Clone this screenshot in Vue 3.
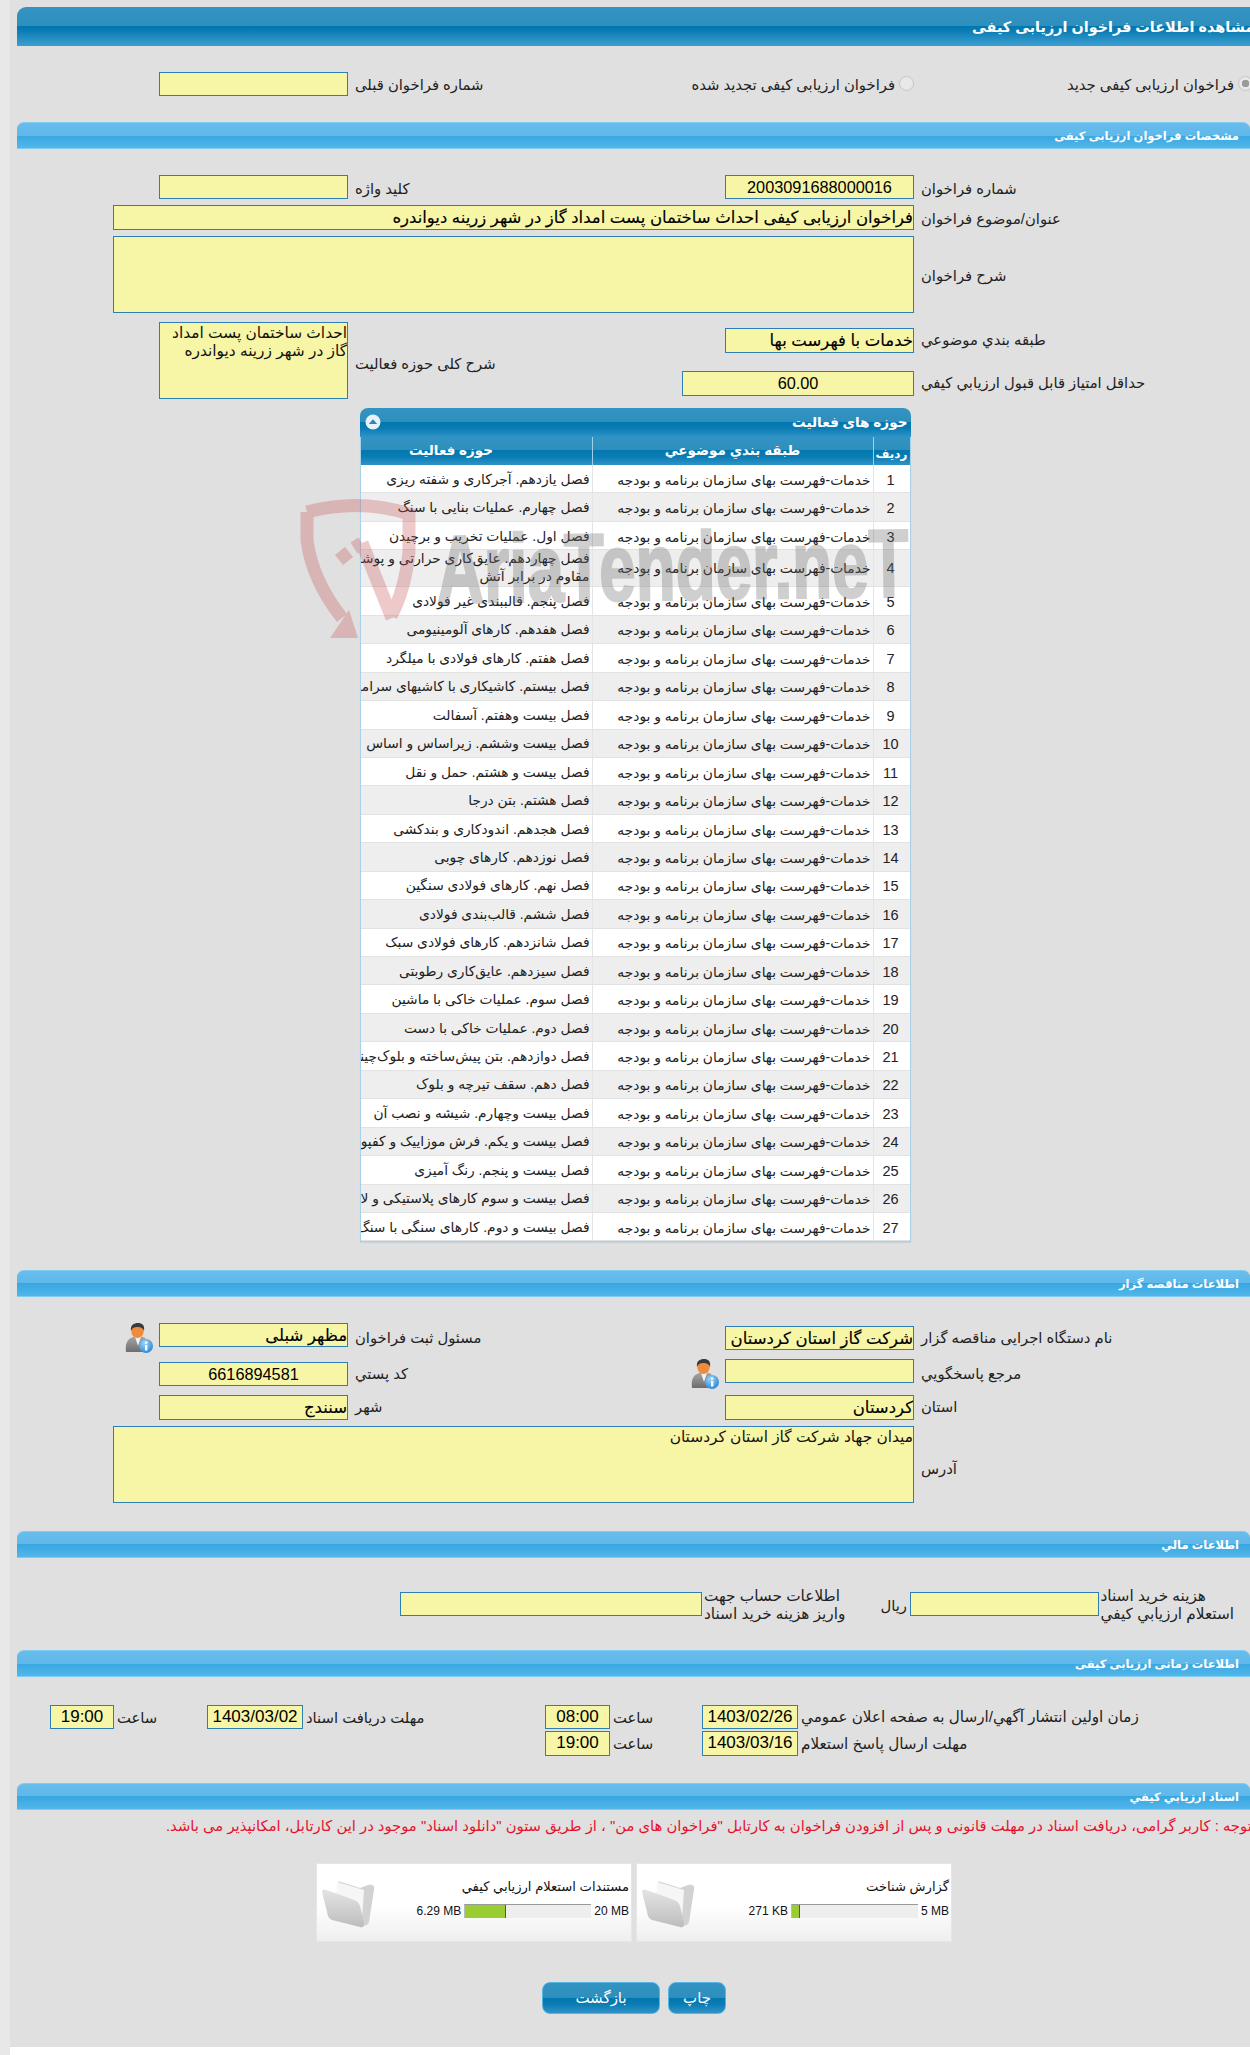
<script setup>
const service = 'خدمات-فهرست بهای سازمان برنامه و بودجه'
const chapters = [
  'فصل یازدهم. آجرکاری و شفته ریزی',
  'فصل چهارم. عملیات بنایی با سنگ',
  'فصل اول. عملیات تخریب و برچیدن',
  'فصل چهاردهم. عایق‌کاری حرارتی و پوشش\nمقاوم در برابر آتش',
  'فصل پنجم. قالببندی غیر فولادی',
  'فصل هفدهم. کارهای آلومینیومی',
  'فصل هفتم. کارهای فولادی با میلگرد',
  'فصل بیستم. کاشیکاری با کاشیهای سرامیکی',
  'فصل بیست وهفتم. آسفالت',
  'فصل بیست وششم. زیراساس و اساس',
  'فصل بیست و هشتم. حمل و نقل',
  'فصل هشتم. بتن درجا',
  'فصل هجدهم. اندودکاری و بندکشی',
  'فصل نوزدهم. کارهای چوبی',
  'فصل نهم. کارهای فولادی سنگین',
  'فصل ششم. قالب‌بندی فولادی',
  'فصل شانزدهم. کارهای فولادی سبک',
  'فصل سیزدهم. عایق‌کاری رطوبتی',
  'فصل سوم. عملیات خاکی با ماشین',
  'فصل دوم. عملیات خاکی با دست',
  'فصل دوازدهم. بتن پیش‌ساخته و بلوک‌چینی',
  'فصل دهم. سقف تیرچه و بلوک',
  'فصل بیست وچهارم. شیشه و نصب آن',
  'فصل بیست و یکم. فرش موزاییک و کفپوش',
  'فصل بیست و پنجم. رنگ آمیزی',
  'فصل بیست و سوم کارهای پلاستیکی و لاستیکی',
  'فصل بیست و دوم. کارهای سنگی با سنگ'
]
const docs = [
  { title: 'مستندات استعلام ارزيابي کيفي', used: '6.29 MB', max: '20 MB', pct: 32 },
  { title: 'گزارش شناخت', used: '271 KB', max: '5 MB', pct: 6 }
]
</script>

<template>
  <div class="page">
    <div class="main">
      <div class="title-bar"><span class="title-text">مشاهده اطلاعات فراخوان ارزیابی کیفی</span></div>

      <div class="form radio-block">
        <div class="box c3"></div>
        <div class="lab c4">شماره فراخوان قبلی</div>
        <div class="radio-cell c45">
          <span class="radio-label">فراخوان ارزیابی کیفی تجدید شده</span><input class="radio" type="radio" disabled>
        </div>
        <div class="radio-cell c6">
          <span class="radio-label">فراخوان ارزیابی کیفی جدید</span><input class="radio on" type="radio" disabled checked>
        </div>
      </div>

      <div class="sec-bar">مشخصات فراخوان ارزیابی کیفی</div>

      <div class="form spec-block">
        <div class="box c3">&nbsp;</div>
        <div class="lab c4">کلید واژه</div>
        <div class="box c5 val num center">2003091688000016</div>
        <div class="lab c6">شماره فراخوان</div>

        <div class="box wide val strong h25 mt6">فراخوان ارزیابی کیفی احداث ساختمان پست امداد گاز در شهر زرینه دیواندره</div>
        <div class="lab c6 mt6">عنوان/موضوع فراخوان</div>

        <div class="box wide area mt6"></div>
        <div class="lab c6 mt6">شرح فراخوان</div>
      </div>

      <div class="form spec-low">
        <div class="box c3 r-all area top">احداث ساختمان پست امداد گاز در شهر زرینه دیواندره</div>
        <div class="lab c4 r-all low-lab">شرح کلی حوزه فعالیت</div>
        <div class="box c5 r1 val strong h25 mt6">خدمات با فهرست بها</div>
        <div class="lab c6 r1 line25 mt6">طبقه بندي موضوعي</div>
        <div class="score-wrap r2 mt9">
          <div class="box val num center score h25">60.00</div>
        </div>
        <div class="lab c6 r2 line25 mt9">حداقل امتياز قابل قبول ارزيابي کيفي</div>
      </div>

      <div class="panel">
        <div class="panel-cap">
          <span class="cap-btn"><svg viewBox="0 0 16 16" width="16" height="16"><circle cx="8" cy="8" r="7.5" fill="#e6f1f8"/><path d="M3.8 10 8 5.2 12.2 10z" fill="#2f86b6"/></svg></span>
          <span>حوزه های فعالیت</span>
        </div>
        <table class="grid">
          <colgroup><col class="col-a"><col class="col-b"><col class="col-c"></colgroup>
          <thead>
            <tr><th class="th-sub">ردیف</th><th>طبقه بندي موضوعي</th><th class="th-ch">حوزه فعالیت</th></tr>
          </thead>
          <tbody>
            <tr v-for="(c, i) in chapters" :key="i" :class="{ alt: i % 2 === 1, tall: c.includes('\n') }">
              <td class="td-num">{{ i + 1 }}</td>
              <td>{{ service }}</td>
              <td class="td-ch"><div class="clip">{{ c }}</div></td>
            </tr>
          </tbody>
        </table>
      </div>

      <div class="sec-bar sec2">اطلاعات مناقصه گزار</div>

      <div class="form org-block">
        <div class="ico c2 r1"><svg class="user" viewBox="0 0 29 30"><use href="#user-info"/></svg></div>
        <div class="box c3 r1 val strong name">مظهر  شبلی</div>
        <div class="lab c4 r1 mt3 line24">مسئول ثبت فراخوان</div>
        <div class="box c5 r1 val strong mt3">شرکت گاز استان کردستان</div>
        <div class="lab c6 r1 mt3 line24">نام دستگاه اجرایی مناقصه گزار</div>

        <div class="box c3 r2 val num center mt3">6616894581</div>
        <div class="lab c4 r2 mt3 line24">کد پستي</div>
        <div class="ico c4l r2"><svg class="user" viewBox="0 0 29 30"><use href="#user-info"/></svg></div>
        <div class="box c5 r2"></div>
        <div class="lab c6 r2 mt3 line24">مرجع پاسخگويي</div>

        <div class="box c3 r3 val strong h25">سنندج</div>
        <div class="lab c4 r3 line25">شهر</div>
        <div class="box c5 r3 val strong h25">کردستان</div>
        <div class="lab c6 r3 line25">استان</div>

        <div class="box wide r4 area top">میدان جهاد شرکت گاز استان کردستان</div>
        <div class="lab c6 r4 addr-lab">آدرس</div>
      </div>

      <div class="sec-bar sec3">اطلاعات مالي</div>

      <div class="fin-block">
        <div class="box"></div>
        <div class="lab two">اطلاعات حساب جهت<br>واریز هزینه خرید اسناد</div>
        <div class="lab rial">ريال</div>
        <div class="box"></div>
        <div class="lab two">هزینه خرید اسناد<br>استعلام ارزيابي کيفي</div>
      </div>

      <div class="sec-bar sec4">اطلاعات زمانی ارزیابی کیفی</div>

      <div class="time-block">
        <div class="box val time center t2">19:00</div>
        <div class="lab t3">ساعت</div>
        <div class="box val time center t4">1403/03/02</div>
        <div class="lab t5">مهلت دریافت اسناد</div>
        <div class="box val time center t6">08:00</div>
        <div class="lab t7">ساعت</div>
        <div class="box val time center t8">1403/02/26</div>
        <div class="lab t9">زمان اولین انتشار آگهي/ارسال به صفحه اعلان عمومي</div>
        <div class="box val time center t6 h25">19:00</div>
        <div class="lab t7">ساعت</div>
        <div class="box val time center t8 h25">1403/03/16</div>
        <div class="lab t9">مهلت ارسال پاسخ استعلام</div>
      </div>

      <div class="sec-bar sec5">اسناد ارزیابي کيفي</div>

      <div class="note"><span>توجه : کاربر گرامی، دریافت اسناد در مهلت قانونی و پس از افزودن فراخوان به کارتابل "فراخوان های من" ، از طریق ستون "دانلود اسناد" موجود در این کارتابل، امکانپذیر می باشد.</span></div>

      <div class="docs">
        <div v-for="d in docs" :key="d.title" class="doc">
          <svg class="folder" viewBox="0 0 56 50">
            <defs>
              <linearGradient id="fb" x1="0" y1="0" x2="0" y2="1"><stop offset="0" stop-color="#e4e4e4"/><stop offset="1" stop-color="#bdbdbd"/></linearGradient>
            </defs>
            <path d="M18 2 40 9 48 6c5-1 7 1 6 5L49 43c-1 3-3 4-6 3Z" fill="#d2d2d2"/>
            <path d="M17 3 44 11 42 40 16 30Z" fill="#f6f6f6"/>
            <path d="M2 13c0-2 2-3 4-2L18 15 34 21c3 1 5 3 6 6L44 44c1 3-1 5-4 4L12 41c-2-1-3-2-4-4Z" fill="url(#fb)"/>
          </svg>
          <div class="doc-body">
            <div class="doc-title">{{ d.title }}</div>
            <div class="doc-row">
              <span>{{ d.used }}</span>
              <span class="bar"><span class="fill" :style="{ width: d.pct + '%' }"></span></span>
              <span>{{ d.max }}</span>
            </div>
          </div>
        </div>
      </div>

      <div class="btns">
        <div class="btn back">بازگشت</div>
        <div class="btn print">چاپ</div>
      </div>

      <div class="watermark">
        <svg class="shield" viewBox="295 495 135 145">
          <g fill="none" stroke="#c85a5e" stroke-width="13">
            <path d="M307 512Q360 498 409 514L409 552Q405 590 391 616"/>
            <path d="M307 512L307 540Q312 580 342 618"/>
            <path d="M362 543 392 618"/>
            <path d="M339 560 349 552M354 548 362 543"/>
          </g>
          <path d="M349 610 358 638 330 638Z" fill="#c85a5e"/>
        </svg>
        <span class="wm-text">AriaTender.neT</span>
      </div>
    </div>
    <div class="foot"></div>

    <svg class="defs" width="0" height="0">
      <defs>
        <linearGradient id="suit" x1="0" y1="0" x2="0" y2="1"><stop offset="0" stop-color="#a8a8a8"/><stop offset="1" stop-color="#6d6d6d"/></linearGradient>
        <radialGradient id="inf" cx=".4" cy=".3" r=".8"><stop offset="0" stop-color="#9fd6f7"/><stop offset="1" stop-color="#1c7fd0"/></radialGradient>
        <g id="user-info">
          <path d="M1 29c-1-8 1-13 7-15l5-1 5 1c5 2 6 6 5 15Z" fill="url(#suit)"/>
          <path d="M10 14 13 23 16 14Z" fill="#f2f2f2"/>
          <ellipse cx="12.5" cy="8" rx="6.2" ry="7" fill="#f08a3c"/>
          <path d="M6 8C5 2 9 0 13 0s7 2 6 8C18 5 16 4 12 4 9 4 7 5 6 8Z" fill="#3a3a3a"/>
          <circle cx="21" cy="23" r="7" fill="url(#inf)"/>
          <rect x="20" y="22" width="2.4" height="5.5" fill="#fff"/>
          <rect x="20" y="18.5" width="2.4" height="2.2" fill="#fff"/>
        </g>
      </defs>
    </svg>
  </div>
</template>

<style>
html, body { margin: 0; padding: 0; background: #fff; overflow-x: hidden; }
</style>

<style scoped>
.page {
  width: 1250px;
  height: 2055px;
  box-sizing: border-box;
  border-left: 10px solid #e8e8e8;
  overflow: hidden;
  font-family: "Liberation Sans", "DejaVu Sans", sans-serif;
  font-size: 14.8px;
  color: #222;
  position: relative;
}
.defs { position: absolute; }
.main {
  height: 2047px;
  box-sizing: border-box;
  background: #e0e0e0;
  padding-top: 7px;
  position: relative;
}
.foot { height: 8px; background: #fff; }

.title-bar {
  margin-left: 7px;
  margin-right: -20px;
  height: 39px;
  border-radius: 9px 0 0 0;
  background: linear-gradient(#3393c2 0, #2e8ebc 50%, #0077b0 50%, #0a7cb3 60%, #3d9fd1 100%);
  display: flex;
  align-items: center;
  padding-left: 955px;
}
.title-text {
  direction: rtl;
  white-space: nowrap;
  color: #fff;
  font-weight: bold;
  font-size: 14.4px;
}

.sec-bar {
  margin-left: 7px;
  height: 27px;
  box-sizing: border-box;
  border-radius: 7px 7px 0 0;
  background: linear-gradient(#68bdec 0, #5fb8e9 50%, #38a7e1 50%, #52b6ea 100%);
  border-top: 1px solid #7fccf2;
  border-bottom: 1px solid #7fccf2;
  color: #fff;
  font-weight: bold;
  font-size: 11.5px;
  direction: rtl;
  padding-right: 11px;
  line-height: 26px;
}

.form {
  display: grid;
  grid-template-columns: 103px 46px 189px 377px 189px 1fr;
  align-items: center;
}
.box {
  box-sizing: border-box;
  height: 24px;
  background: #f7f5a6;
  border: 1px solid #2f7db5;
  direction: rtl;
  line-height: 22px;
  white-space: pre;
  overflow: hidden;
}
.h25 { height: 25px; }
.c2 { grid-column: 2; }
.c3 { grid-column: 3; }
.c4 { grid-column: 4; }
.c4l { grid-column: 4; justify-self: end; }
.c5 { grid-column: 5; }
.c6 { grid-column: 6; }
.wide { grid-column: 2 / 6; }
.lab {
  direction: rtl;
  text-align: left;
  padding-left: 7px;
  white-space: nowrap;
  color: #222;
}
.line24 { line-height: 24px; }
.line25 { line-height: 25px; }
.val { color: #000; }
.num { font-size: 16.3px; }
.time { font-size: 17px; }
.strong { font-size: 16.5px; -webkit-text-stroke: 0.15px #000; }
.center { text-align: center; }
.area {
  height: 77px;
  white-space: normal;
  line-height: 18px;
  font-size: 15.4px;
  color: #111;
}
.top { align-self: start; padding-top: 1px; }
.mt3 { margin-top: 3px; }
.mt6 { margin-top: 6px; }
.mt9 { margin-top: 9px; }

.radio-block { padding-top: 26px; height: 76px; box-sizing: border-box; align-items: start; grid-template-rows: 24px; }
.radio-block > * { grid-row: 1; }
.radio-block .lab { line-height: 26px; }
.radio-cell {
  display: flex;
  justify-content: flex-end;
  white-space: nowrap;
  height: 24px;
  line-height: 26px;
}
.c45 { grid-column: 4 / 6; }
.c6.radio-cell { margin-right: -3px; }
.radio-label { direction: rtl; }
.radio {
  appearance: none;
  margin: 4px 0 0 4px;
  width: 15px;
  height: 15px;
  box-sizing: border-box;
  border-radius: 50%;
  border: 1px solid #c4c4c4;
  background: #e8e8e8;
  flex: none;
}
.radio.on { background: radial-gradient(circle, #9b9b9b 0 3.5px, #e8e8e8 4px); }

.spec-block { padding-top: 26px; }
.spec-block .lab { padding-top: 2px; }
.spec-low {
  margin-top: 9px;
  grid-template-rows: 40px 37px;
  align-items: start;
}
.r-all { grid-row: 1 / 3; }
.low-lab { align-self: center; margin-top: 5px; }
.score-wrap { grid-column: 4 / 6; display: flex; justify-content: flex-end; }
.score { width: 232px; }

.panel {
  margin: 9px 0 0 349.5px;
  width: 551px;
  border-bottom: 1px solid #a8d0e8;
  box-shadow: 0 1px 1px #c8d4dc;
}
.panel-cap {
  height: 29px;
  box-sizing: border-box;
  border-radius: 8px 8px 0 0;
  background: linear-gradient(#3393c2 0, #2e8ebc 50%, #0077b0 50%, #0a7cb3 70%, #2f93c7 100%);
  color: #fff;
  font-weight: bold;
  font-size: 13.6px;
  display: flex;
  justify-content: space-between;
  align-items: center;
  padding: 0 3px 2px 5px;
}
.panel-cap span:last-child { direction: rtl; }
.cap-btn { display: flex; }
.grid {
  width: 100%;
  table-layout: fixed;
  border-collapse: separate;
  border-spacing: 0;
  direction: rtl;
  background: #fff;
  border-left: 1px solid #a8d0e8;
  border-right: 1px solid #a8d0e8;
  font-size: 13.8px;
}
.col-a { width: 37px; }
.col-b { width: 281px; }
.grid th {
  height: 28px;
  box-sizing: border-box;
  padding: 0 0 3px;
  background: linear-gradient(#3393c2 0, #2e8ebc 45%, #0077b0 45%, #0a7cb3 70%, #2f93c7 100%);
  color: #fff;
  font-weight: bold;
  font-size: 13.5px;
  border-left: 1px solid #9fd0ea;
}
.grid th:last-child { border-left: 0; }
.grid .th-sub { padding: 6px 0 0; font-size: 12px; }
.grid .th-ch { padding-right: 50px; }
.grid td {
  height: 28.45px;
  box-sizing: border-box;
  padding: 2px 2px 0 0;
  border-bottom: 1px solid #e2e2e2;
  border-left: 1px solid #e4e4e4;
  white-space: nowrap;
  overflow: hidden;
  color: #222;
}
.grid td:last-child { border-left: 0; }
.alt td { background: #eeeeee; }
.grid .tall td { height: 35.4px; padding-top: 0; }
.td-num { text-align: center; font-size: 14.5px; }
.clip { white-space: pre; overflow: hidden; line-height: 18px; }

.sec2 { margin-top: 28px; }
.org-block {
  padding-top: 26px;
  grid-template-rows: 36px 36px 31px 77px;
  align-items: start;
}
.r1 { grid-row: 1; }
.r2 { grid-row: 2; }
.r3 { grid-row: 3; }
.r4 { grid-row: 4; }
.ico { display: flex; }
.ico.c2 { justify-content: flex-end; padding-right: 5px; }
.ico.c4l { padding-right: 5px; }
.user { width: 29px; height: 30px; }
.addr-lab { align-self: center; margin-top: 8px; }

.sec3 { margin-top: 28px; }
.fin-block {
  display: grid;
  grid-template-columns: 302px 179px 29px 188.5px 1fr;
  margin: 34px 0 0 390px;
  height: 58px;
  align-items: start;
}
.two { line-height: 18px; padding-left: 2px; margin-top: -5px; font-size: 15.3px; }
.rial { padding-left: 0; line-height: 24px; text-align: right; margin-top: 2px; padding-right: 3px; }

.time-block {
  display: grid;
  grid-template-columns: 64px 93px 96px 242px 65px 92px 96px 1fr;
  margin: 28px 0 0 40px;
  row-gap: 2px;
  align-items: center;
  height: 78px;
  align-content: start;
}
.t2 { grid-column: 1; }
.t3 { grid-column: 2; padding-left: 3px; }
.t4 { grid-column: 3; }
.t5 { grid-column: 4; padding-left: 3px; }
.t6 { grid-column: 5; }
.t7 { grid-column: 6; padding-left: 3px; }
.t8 { grid-column: 7; }
.t9 { grid-column: 8; padding-left: 3px; font-size: 15.2px; }

.note {
  margin: 6px 0 0 156px;
  height: 20px;
  display: flex;
  color: #e8102c;
  line-height: 20px;
  white-space: nowrap;
}
.note span { direction: rtl; }

.docs {
  display: flex;
  gap: 4px;
  margin: 27px 0 0 306px;
}
.doc {
  width: 316px;
  height: 79px;
  box-sizing: border-box;
  border: 1px solid #e6e6e6;
  background: linear-gradient(#fff 0, #fff 55%, #eeeeee 100%);
  display: flex;
  padding: 15px 2px 0 3px;
}
.folder { width: 56px; height: 50px; flex: none; }
.doc-body { flex: 1; direction: ltr; margin-top: -1px; }
.doc-title { direction: rtl; font-size: 13.1px; line-height: 18px; color: #111; }
.doc-row {
  display: flex;
  justify-content: flex-end;
  align-items: center;
  gap: 3px;
  margin-top: 8px;
  font-size: 12px;
  height: 14px;
  color: #111;
}
.bar {
  width: 127px;
  height: 14px;
  box-sizing: border-box;
  background: #eeeeee;
  border-top: 1px solid #999;
  border-left: 1px solid #bbb;
  display: flex;
}
.fill {
  background: #9acd32;
  border-right: 1px solid #555;
  box-sizing: border-box;
  height: 100%;
}

.btns { display: flex; gap: 8px; margin: 40px 0 0 532px; }
.btn {
  box-sizing: border-box;
  height: 32px;
  border-radius: 8px;
  border: 1px solid #58b4e0;
  background: linear-gradient(#3393c2 0, #2e8ebc 50%, #0077b0 50%, #0a7cb3 70%, #2f93c7 100%);
  color: #fff;
  text-align: center;
  direction: rtl;
  line-height: 30px;
  font-size: 15px;
}
.back { width: 118px; }
.print { width: 58px; }

.watermark {
  position: absolute;
  left: 0;
  top: 0;
  pointer-events: none;
}
.shield {
  position: absolute;
  left: 285px;
  top: 495px;
  width: 135px;
  height: 145px;
  opacity: 0.32;
}
.wm-text {
  position: absolute;
  left: 427px;
  top: 524px;
  font-family: "Liberation Sans", sans-serif;
  font-weight: bold;
  font-size: 84px;
  line-height: 100px;
  white-space: nowrap;
  color: #6e6e6e;
  -webkit-text-stroke: 2px #6e6e6e;
  opacity: 0.32;
  transform-origin: 0 79px;
  transform: rotate(-0.8deg) scale(0.78, 1.15);
}
</style>
